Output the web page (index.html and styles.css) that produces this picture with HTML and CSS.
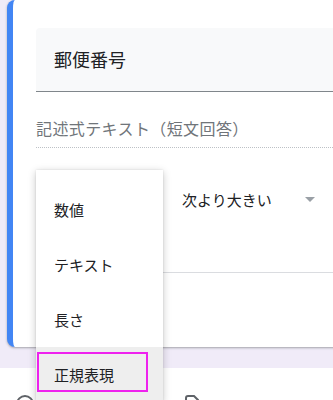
FILE: index.html
```html
<!DOCTYPE html>
<html lang="ja">
<head>
    <meta charset="UTF-8">
    <meta name="viewport" content="width=device-width, initial-scale=1.0">
    <title>フォーム - 回答の検証</title>
    <link rel="stylesheet" href="styles.css">
</head>
<body>
    <div class="page">
        <div class="card">
            <div class="card-body">
                <div class="title-field">郵便番号</div>
                <div class="answer-hint">記述式テキスト（短文回答）</div>
                <div class="rule-row">
                    <div class="select select-type"></div>
                    <div class="select select-op">
                        <span>次より大きい</span>
                        <span class="arrow"></span>
                    </div>
                </div>
            </div>
            <div class="card-footer"></div>
        </div>

        <div class="toolbar">
            <svg class="tool-icon icon-add" width="20" height="20" viewBox="0 0 20 20">
                <circle cx="10" cy="10" r="8" fill="none" stroke="#5f6368" stroke-width="2"/>
            </svg>
            <svg class="tool-icon icon-doc" width="20" height="20" viewBox="0 0 20 20">
                <path d="M3 14 V4 a2 2 0 0 1 2 -2 h6 l4 4 v8" fill="none" stroke="#5f6368" stroke-width="2"/>
            </svg>
        </div>

        <ul class="menu">
            <li class="menu-item">数値</li>
            <li class="menu-item">テキスト</li>
            <li class="menu-item">長さ</li>
            <li class="menu-item selected">正規表現<span class="mark"></span></li>
        </ul>
    </div>
</body>
</html>
```

FILE: styles.css
```css
* {
    margin: 0;
    padding: 0;
    box-sizing: border-box;
    font-family: "Noto Sans CJK JP", "Noto Sans", sans-serif;
}

body {
    background-color: #f0ebf8;
    overflow: hidden;
    height: 400px;
}

.page {
    position: relative;
    height: 400px;
}

.card {
    width: 380px;
    margin-left: 7px;
    background: white;
    border-radius: 8px;
    border-left: 6px solid #4285f4;
    box-shadow: 0 1px 2px rgba(60, 64, 67, 0.3), 0 1px 3px rgba(60, 64, 67, 0.15);
}

.card-body {
    padding: 28px 0 48px 23px;
}

.title-field {
    height: 64px;
    padding-left: 18px;
    background: #f8f9fa;
    border-bottom: 1px solid #80868b;
    border-radius: 4px 0 0 0;
    font-size: 18px;
    line-height: 63px;
    color: #202124;
}

.answer-hint {
    margin-top: 24px;
    padding-bottom: 7px;
    border-bottom: 1px dotted #bdc1c6;
    font-size: 16px;
    letter-spacing: 0.4px;
    line-height: 24px;
    color: #70757a;
}

.rule-row {
    display: flex;
    gap: 18px;
    height: 48px;
    margin-top: 28px;
    align-items: center;
}

.select {
    font-size: 15px;
    line-height: 24px;
    color: #202124;
}

.select-type {
    width: 128px;
    height: 24px;
}

.select-op {
    width: 136px;
    display: flex;
    align-items: center;
    justify-content: space-between;
    padding-right: 3px;
}

.arrow {
    width: 0;
    height: 0;
    border-left: 5px solid transparent;
    border-right: 5px solid transparent;
    border-top: 5px solid #9aa0a6;
    margin-top: -2px;
}

.card-footer {
    height: 75px;
    border-top: 1px solid #dadce0;
    margin-left: 23px;
}

.toolbar {
    margin-top: 21px;
    height: 40px;
    background: white;
    display: flex;
    padding-top: 26px;
}

.icon-add {
    margin-left: 15px;
}

.icon-doc {
    margin-left: 148px;
}

.menu {
    position: absolute;
    left: 36px;
    top: 170px;
    width: 127px;
    padding-top: 12px;
    list-style: none;
    background: white;
    box-shadow: 0 2px 8px rgba(0, 0, 0, 0.22), 0 0 2px rgba(0, 0, 0, 0.1);
}

.menu-item {
    position: relative;
    height: 55px;
    padding-left: 18px;
    font-size: 15px;
    line-height: 55px;
    color: #202124;
}

.menu-item.selected {
    background: #eeeeee;
}

.mark {
    position: absolute;
    left: 1px;
    top: 5px;
    width: 111px;
    height: 40px;
    border: 2px solid #ee22ee;
}
```
